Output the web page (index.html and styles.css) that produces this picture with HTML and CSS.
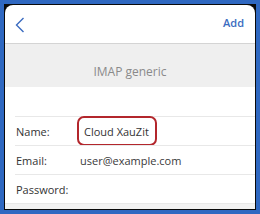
FILE: index.html
```html
<!DOCTYPE html>
<html lang="en">
<head>
    <meta charset="UTF-8">
    <title>IMAP generic</title>
    <link rel="stylesheet" href="styles.css">
</head>
<body>
    <div class="frame">
        <div class="sheet">
            <header class="topbar">
                <svg class="back" width="10" height="16" viewBox="0 0 10 16">
                    <polyline points="8.5,1 1.5,8 8.5,15" fill="none" stroke="#3b6cc0" stroke-width="1.4"/>
                </svg>
                <span class="add">Add</span>
            </header>

            <div class="title">IMAP generic</div>

            <div class="spacer"></div>

            <div class="row">
                <span class="label">Name:</span>
                <span class="value highlight">Cloud XauZit</span>
            </div>
            <div class="row">
                <span class="label">Email:</span>
                <span class="value">user@example.com</span>
            </div>
            <div class="row">
                <span class="label">Password:</span>
                <span class="value"></span>
            </div>

            <div class="footer"></div>
        </div>
    </div>
</body>
</html>
```

FILE: styles.css
```css
* {
    margin: 0;
    padding: 0;
    box-sizing: border-box;
}

body {
    width: 260px;
    height: 214px;
    padding: 4px;
    background: #2f68c1;
    font-family: 'Open Sans', sans-serif;
    font-size: 11px;
    overflow: hidden;
}

.frame {
    height: 206px;
    border: 1px solid #0a0a0a;
    background: #0a0a0a;
}

.sheet {
    height: 100%;
    background: #fff;
    border-radius: 8px 8px 0 0;
    display: flex;
    flex-direction: column;
    overflow: hidden;
}

.topbar {
    height: 39px;
    flex-shrink: 0;
    display: flex;
    align-items: center;
    justify-content: space-between;
    padding: 0 11px 0 10px;
    border-bottom: 1px solid #d4d4d4;
}

.back {
    display: block;
    margin-top: 1px;
}

.add {
    color: #3b6cc0;
    font-weight: 600;
    margin-top: -3px;
}

.title {
    height: 43px;
    flex-shrink: 0;
    background: #efefef;
    color: #8a8a8a;
    font-size: 12px;
    line-height: 16px;
    text-align: center;
    padding-top: 20px;
}

.spacer {
    height: 29px;
    flex-shrink: 0;
}

.row {
    height: 29px;
    flex-shrink: 0;
    margin-left: 10px;
    padding-left: 1px;
    border-top: 1px solid #e8e8e8;
    display: flex;
    align-items: center;
    color: #333;
}

.label {
    width: 64px;
}

.value {
    color: #3a3a3a;
}

/* red outline round the account name */
.highlight {
    margin-left: -3px;
    height: 30px;
    width: 80px;
    padding-left: 5px;
    display: flex;
    align-items: center;
    border: 2px solid #b3262c;
    border-radius: 7px;
    color: #333;
}

.footer {
    flex: 1;
    border-top: 1px solid #e8e8e8;
    margin-top: 0;
    background: #f2f2f2;
}
```
